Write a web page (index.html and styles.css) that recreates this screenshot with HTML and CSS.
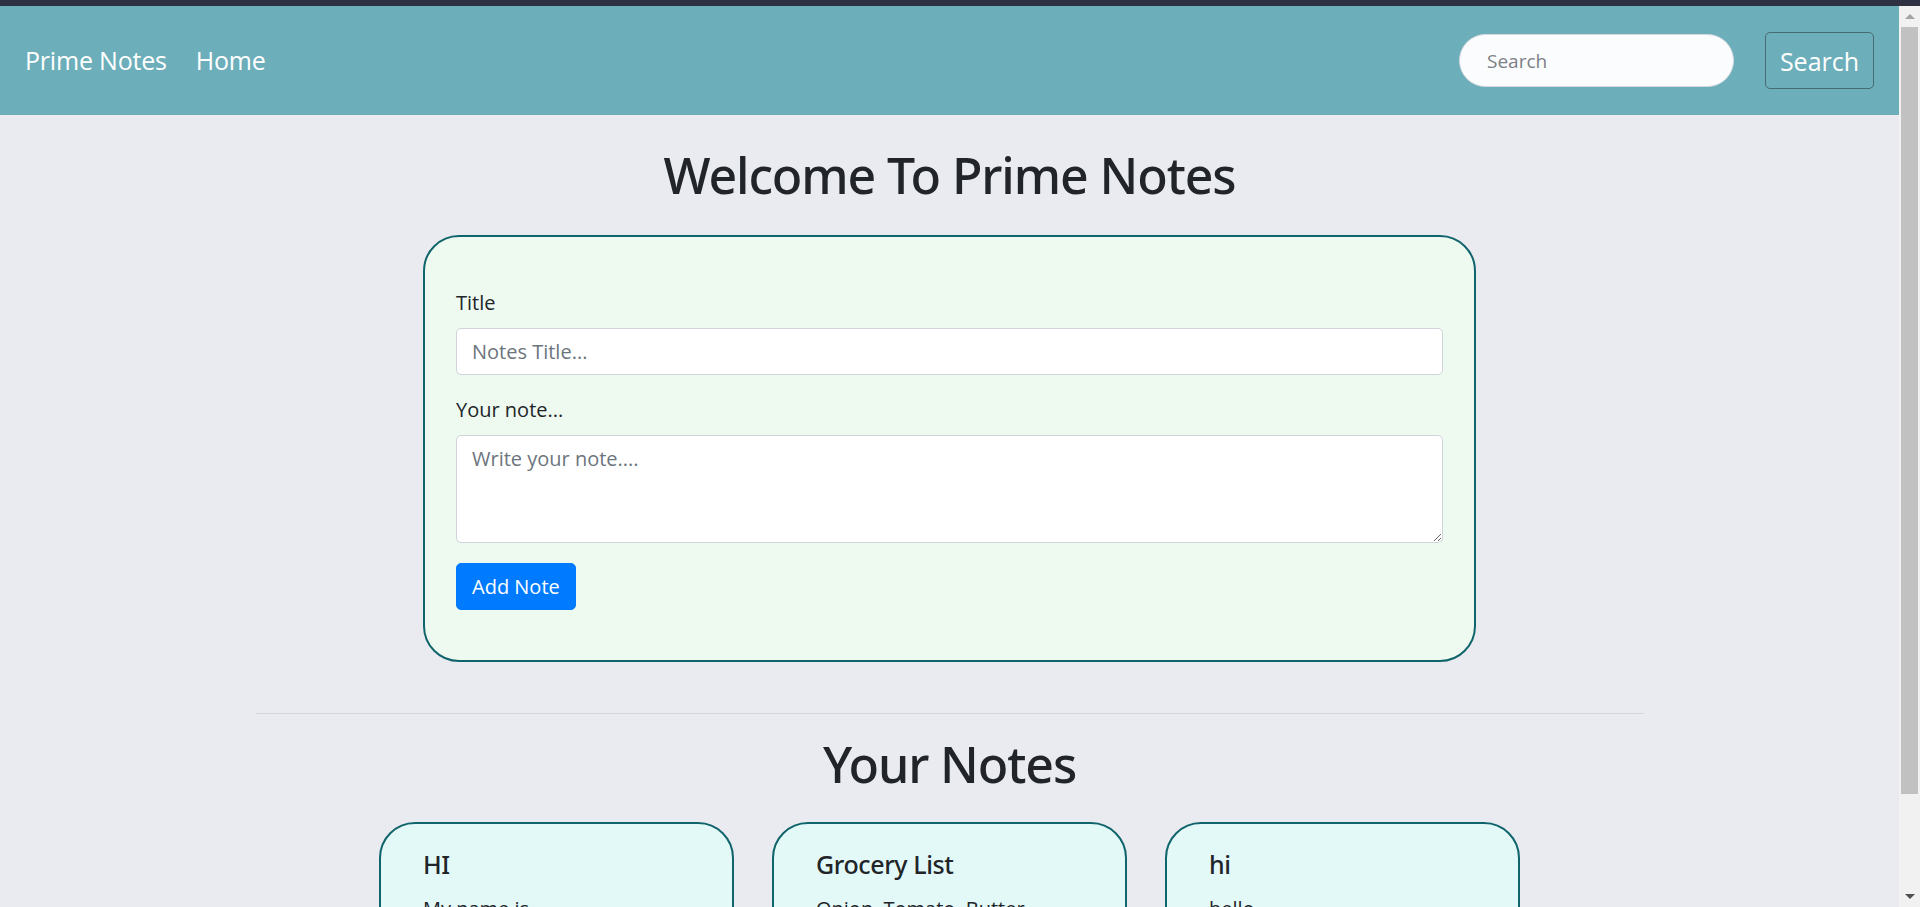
FILE: index.html
```html
<!DOCTYPE html>
<html lang="en">
<head>
<meta charset="utf-8">
<title>Prime Notes</title>
<link rel="stylesheet" href="styles.css">
</head>
<body>
<div class="chrome-bar"></div>
<div class="window">
  <div class="page">
    <nav class="navbar">
      <div class="nav-left">
        <a class="brand" href="#">Prime Notes</a>
        <a class="nav-link" href="#">Home</a>
      </div>
      <form class="search">
        <input class="search-input" type="search" placeholder="Search">
        <button class="search-btn" type="button">Search</button>
      </form>
    </nav>
    <main class="container">
      <h1 class="heading">Welcome To Prime Notes</h1>
      <form class="form-card">
        <div class="form-group">
          <label class="label" for="title">Title</label>
          <input class="control" id="title" type="text" placeholder="Notes Title...">
        </div>
        <div class="form-group">
          <label class="label" for="note">Your note...</label>
          <textarea class="control area" id="note" placeholder="Write your note...."></textarea>
        </div>
        <button class="add-btn" type="button">Add Note</button>
      </form>
      <hr class="divider">
      <h1 class="heading heading-notes">Your Notes</h1>
      <div class="notes">
        <div class="note-card">
          <h5 class="note-title">HI</h5>
          <p class="note-text">My name is</p>
        </div>
        <div class="note-card">
          <h5 class="note-title">Grocery List</h5>
          <p class="note-text">Onion, Tomato, Butter</p>
        </div>
        <div class="note-card">
          <h5 class="note-title">hi</h5>
          <p class="note-text">hello</p>
        </div>
      </div>
    </main>
  </div>
  <div class="scrollbar">
    <div class="sb-arrow sb-up"></div>
    <div class="sb-thumb"></div>
    <div class="sb-rest"></div>
    <div class="sb-arrow sb-down"></div>
  </div>
</div>
</body>
</html>
```

FILE: styles.css
```css
* { box-sizing: border-box; }

html, body {
  margin: 0;
  height: 100%;
  overflow: hidden;
}

body {
  font-family: "Open Sans", "Noto Sans", sans-serif;
  color: #212529;
  background: #eaebf0;
  display: flex;
  flex-direction: column;
}

.chrome-bar {
  height: 6px;
  background: #2d3142;
  flex: none;
}

.window {
  flex: 1;
  display: flex;
  min-height: 0;
}

.page {
  flex: 1;
  min-width: 0;
  overflow: hidden;
}

/* navbar */
.navbar {
  height: 109px;
  background: #6caeba;
  display: flex;
  align-items: center;
  justify-content: space-between;
  padding: 0 25px 0 25px;
}

.nav-left {
  display: flex;
  align-items: center;
  gap: 29px;
}

.brand, .nav-link {
  color: #fff;
  text-decoration: none;
  font-size: 25px;
  line-height: 37.5px;
  letter-spacing: -0.2px;
}

.search {
  display: flex;
  align-items: center;
  gap: 31px;
  margin: 0;
}

.search-input {
  width: 275px;
  height: 53px;
  border-radius: 27px;
  border: 1px solid #d6dadf;
  background: #fbfcfd;
  font-family: inherit;
  font-size: 19px;
  padding: 0 27px;
  color: #495057;
  outline: none;
}

.search-input::placeholder { color: #7b8087; }

.search-btn {
  width: 109px;
  height: 57px;
  border: 1px solid #486a72;
  border-radius: 5px;
  background: transparent;
  color: #fff;
  font-family: inherit;
  font-size: 25px;
  padding: 0;
}

/* main container */
.container {
  width: 1388px;
  margin: 0 auto;
}

.heading {
  font-family: "Noto Sans", "Open Sans", sans-serif;
  font-size: 50px;
  font-weight: 500;
  line-height: 60px;
  letter-spacing: -1.1px;
  text-align: center;
  margin: 30px 0 30px;
}

.heading-notes {
  margin: 20px 0 28px;
}

.form-card {
  width: 1053px;
  margin: 0 auto;
  background: #eef9f0;
  border: 2px solid #10646b;
  border-radius: 36px;
  padding: 51px 31px 50px;
}

.form-group {
  margin-bottom: 20px;
}

.label {
  display: block;
  font-size: 20px;
  line-height: 30px;
  margin-bottom: 10px;
}

.control {
  display: block;
  width: 100%;
  height: 47px;
  font-family: inherit;
  font-size: 20px;
  line-height: 30px;
  padding: 7.5px 15px;
  border: 1px solid #ced4da;
  border-radius: 5px;
  background: #fff;
  color: #495057;
  outline: none;
}

.control::placeholder { color: #6c757d; }

.area {
  height: 108px;
  resize: vertical;
}

.add-btn {
  height: 47px;
  padding: 0 15px;
  background: #007bff;
  border: 1px solid #007bff;
  border-radius: 5px;
  color: #fff;
  font-family: inherit;
  font-size: 20px;
}

.divider {
  margin: 51px 0 0;
  border: 0;
  border-top: 1px solid #d4d5da;
}

/* notes */
.notes {
  display: flex;
  justify-content: center;
  gap: 38px;
}

.note-card {
  width: 355px;
  height: 300px;
  flex: none;
  background: #e3f9f8;
  border: 2px solid #10646b;
  border-radius: 36px;
  padding: 25px 42px;
}

.note-title {
  font-family: "Noto Sans", "Open Sans", sans-serif;
  margin: 0 0 15px;
  font-size: 25px;
  font-weight: 500;
  line-height: 30px;
  letter-spacing: -0.4px;
}

.note-text {
  margin: 0;
  font-size: 20px;
  line-height: 30px;
}

/* fake scrollbar */
.scrollbar {
  width: 21px;
  flex: none;
  background: #f1f1f1;
  display: flex;
  flex-direction: column;
  align-items: center;
}

.sb-arrow {
  height: 21px;
  width: 21px;
  flex: none;
  display: flex;
  align-items: center;
  justify-content: center;
}

.sb-up::before {
  content: "";
  border-left: 5px solid transparent;
  border-right: 5px solid transparent;
  border-bottom: 5px solid #a3a3a3;
}

.sb-down::before {
  content: "";
  border-left: 5px solid transparent;
  border-right: 5px solid transparent;
  border-top: 5px solid #505050;
}

.sb-thumb {
  width: 17px;
  height: 767px;
  background: #c1c1c1;
  flex: none;
}

.sb-rest { flex: 1; }
```
